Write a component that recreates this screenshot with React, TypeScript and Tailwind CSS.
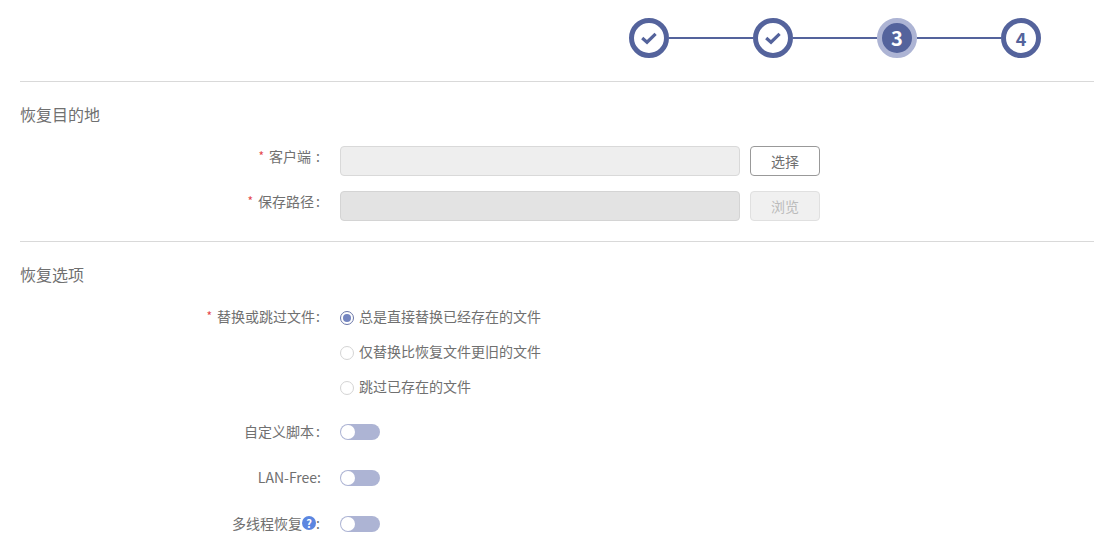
import React from "react";

function Check() {
  return (
    <svg width="16" height="14" viewBox="0 0 16 14" fill="none">
      <path d="M1.2 7 L6 11.2 L14.6 2.8" stroke="#54639c" strokeWidth="3.2" />
    </svg>
  );
}
function Done() {
  return (
    <div className="flex h-10 w-10 shrink-0 items-center justify-center rounded-full border-[5px] border-[#54639c] bg-white">
      <Check />
    </div>
  );
}
function Line() {
  return <div className="h-[2px] w-[84px] shrink-0 bg-[#54639c]" />;
}
function Label({ req, children }: { req?: boolean; children: React.ReactNode }) {
  return (
    <div className="flex h-5 w-[300px] shrink-0 items-center justify-end self-start text-[14px] leading-5 text-[#707070]">
      {req && <span className="mr-[5px] text-[12px] text-[#e5484d]">*</span>}
      {children}
    </div>
  );
}
function Radio({ on, children }: { on?: boolean; children: React.ReactNode }) {
  return (
    <div className="flex h-[35px] items-center text-[14px] leading-[22px] text-[#707070]">
      <span className={`mr-[5px] flex h-[14px] w-[14px] items-center justify-center rounded-full border bg-white ${on ? "border-[#6a76a8]" : "border-[#d4d4d4]"}`}>
        {on && <span className="h-2 w-2 rounded-full bg-[#7485c0]" />}
      </span>
      <span className="-mt-[3px]">{children}</span>
    </div>
  );
}
function Toggle() {
  return (
    <div className="flex h-4 w-10 items-center rounded-full bg-[#adb4d4] pl-[1px]">
      <span className="h-[14px] w-[14px] rounded-full bg-white" />
    </div>
  );
}

export default function App() {
  return (
    <div className="h-[554px] w-[1094px] overflow-hidden bg-white pl-5 font-['Noto_Sans_CJK_SC','Noto_Sans',sans-serif]">
      <div className="flex h-[81px] items-start justify-end pt-[18px] pr-[53px]">
        <div className="flex items-center">
          <Done />
          <Line />
          <Done />
          <Line />
          <div className="flex h-10 w-10 shrink-0 items-center justify-center rounded-full border-[5px] border-[#adb4d4] bg-[#54639c] text-[20px] font-bold text-white">3</div>
          <Line />
          <div className="flex h-10 w-10 shrink-0 items-center justify-center rounded-full border-[5px] border-[#54639c] bg-white text-[18px] font-bold text-[#54639c]">4</div>
        </div>
      </div>
      <div className="h-px bg-[#d9d9d9]" />
      <div className="flex h-[64px] items-start pt-5 text-[16px] leading-[24px] text-[#707070]">恢复目的地</div>
      <div className="flex h-[30px] items-center">
        <Label req>客户端<span className="ml-[5px]">:</span></Label>
        <div className="ml-5 h-[30px] w-[400px] rounded-[4px] border border-[#d9d9d9] bg-[#eeeeee]" />
        <button className="ml-[10px] h-[30px] w-[70px] rounded-[4px] border border-[#999] bg-white text-[14px] text-[#707070]">选择</button>
      </div>
      <div className="mt-[15px] flex h-[30px] items-center">
        <Label req>保存路径<span className="ml-[2px]">:</span></Label>
        <div className="ml-5 h-[30px] w-[400px] rounded-[4px] border border-[#d4d4d4] bg-[#e3e3e3]" />
        <button className="ml-[10px] h-[30px] w-[70px] rounded-[4px] border border-[#e0e0e0] bg-[#f0f0f0] text-[14px] text-[#bbb]">浏览</button>
      </div>
      <div className="mt-5 h-px bg-[#d9d9d9]" />
      <div className="flex h-[58px] items-start pt-5 text-[16px] leading-[24px] text-[#707070]">恢复选项</div>
      <div className="flex">
        <div className="pt-[6px]">
          <Label req>替换或跳过文件<span className="ml-px">:</span></Label>
        </div>
        <div className="ml-5 flex flex-col">
          <Radio on>总是直接替换已经存在的文件</Radio>
          <Radio>仅替换比恢复文件更旧的文件</Radio>
          <Radio>跳过已存在的文件</Radio>
        </div>
      </div>
      <div className="mt-[19px] flex h-4 items-center">
        <div className="-mt-[3px]"><Label>自定义脚本<span className="ml-[2px]">:</span></Label></div>
        <div className="ml-5"><Toggle /></div>
      </div>
      <div className="mt-[30px] flex h-4 items-center">
        <div className="-mt-[2px] pl-px"><Label>LAN-Free:</Label></div>
        <div className="ml-[19px]"><Toggle /></div>
      </div>
      <div className="mt-[30px] flex h-4 items-center">
        <div className="-mt-[2px]">
          <Label>
            多线程恢复
            <span className="flex h-[14px] w-[14px] items-center justify-center rounded-full bg-[#5b86e0] text-[11px] font-bold text-white">?</span>
            :
          </Label>
        </div>
        <div className="ml-5"><Toggle /></div>
      </div>
    </div>
  );
}
